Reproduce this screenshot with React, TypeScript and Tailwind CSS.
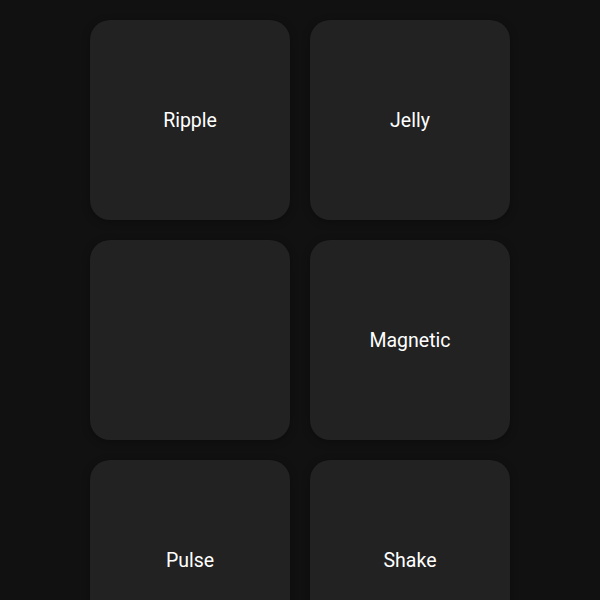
import React from "react";

const items = ["Ripple", "Jelly", "", "Magnetic", "Pulse", "Shake"];

export default function App() {
  return (
    <div className="w-[600px] h-[600px] overflow-hidden bg-[#111111] flex justify-center pt-[20px]" style={{ fontFamily: "Roboto, sans-serif" }}>
      <div className="grid grid-cols-[200px_200px] gap-[20px] content-start">
        {items.map((t, i) => (
          <div key={i} className="w-[200px] h-[200px] rounded-[20px] bg-[#222222] shadow-[0_2px_8px_rgba(0,0,0,0.3)] flex items-center justify-center text-white text-[19.5px] pt-[2px]">
            {t}
          </div>
        ))}
      </div>
    </div>
  );
}
